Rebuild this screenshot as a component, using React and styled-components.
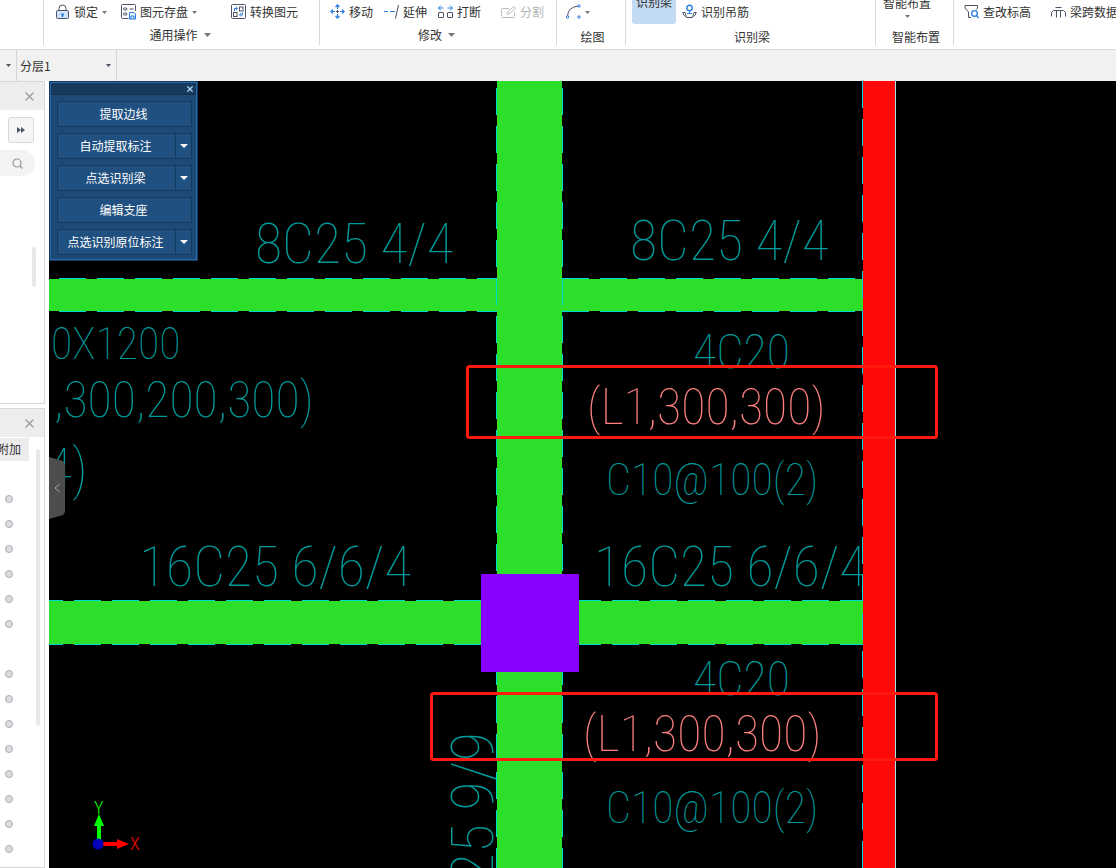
import React, { useState } from 'react'
import styled, { createGlobalStyle } from 'styled-components'

const GlobalStyle = createGlobalStyle`
  * {
    box-sizing: border-box;
  }

  body {
    margin: 0;
    background: #fff;
    color: #333;
    font-family: "Noto Sans CJK SC", "Liberation Sans", sans-serif;
    font-size: 12px;
    line-height: 16px;
  }

  button, select, input {
    font: inherit;
    color: inherit;
  }

  svg {
    display: block;
    flex-shrink: 0;
  }
`;

const Page = styled.div`
  display: flex;
  flex-direction: column;
  height: 100vh;
  overflow: hidden;
`;

/* ---------- ribbon ---------- */

const Ribbon = styled.header`
  display: flex;
  height: 50px;
  flex-shrink: 0;
  padding-bottom: 4px;
  border-bottom: 1px solid #d9d9d9;
  background: #fff;
  overflow: hidden;
`;

const Group = styled.section`
  display: flex;
  flex-direction: column;
  justify-content: flex-end;
  flex: ${props => props.$width ? `0 0 ${props.$width}px` : '1 0 0'};
  min-width: 0;
  padding-bottom: ${props => props.$menu ? '2px' : '0'};
  border-right: ${props => props.$width ? '1px solid #d9d9d9' : '0'};
`;

const Tools = styled.div`
  display: grid;
  grid-template-columns: ${props => props.$columns};
  align-items: end;
  padding-left: ${props => props.$inset}px;
  padding-bottom: ${props => props.$menu ? '7px' : '9px'};
`;

const Tool = styled.button`
  display: flex;
  align-items: center;
  gap: 4px;
  height: 16px;
  padding: 0;
  border: 0;
  background: none;
  white-space: nowrap;
  color: ${props => props.disabled ? '#b4b4b4' : '#333'};
`;

const TallTool = styled.button`
  display: flex;
  flex-direction: column;
  justify-content: flex-end;
  align-items: center;
  gap: 4px;
  width: ${props => props.$width}px;
  height: 66px;
  margin-bottom: -4px;
  padding: 0 0 ${props => props.$active ? '14px' : '6px'};
  border: 0;
  border-radius: 3px;
  background: ${props => props.$active ? '#c2daf2' : 'none'};
  white-space: nowrap;
`;

const GroupLabel = styled.div`
  display: flex;
  align-items: center;
  justify-content: center;
  gap: 6px;
  height: 16px;
  padding-left: ${props => props.$menu ? '0' : '3px'};
  padding-right: ${props => props.$menu ? '3px' : '0'};
`;

/* ---------- layer bar ---------- */

const LayerBar = styled.div`
  display: flex;
  height: 31px;
  flex-shrink: 0;
  background: #f1f1f1;
`;

const FloorButton = styled.button`
  display: flex;
  align-items: center;
  width: 17px;
  padding: 0 0 0 6px;
  border: 0;
  border-right: 1px solid #d5d5d5;
  background: none;
`;

const LayerField = styled.label`
  display: grid;
  grid-template-columns: 1fr 10px;
  align-items: center;
  width: 100px;
  border-right: 1px solid #d5d5d5;

  select {
    grid-area: 1 / 1 / 2 / 3;
    height: 30px;
    padding: 0 12px 0 3px;
    border: 0;
    background: none;
    appearance: none;
  }

  svg {
    grid-area: 1 / 2;
    pointer-events: none;
  }
`;

/* ---------- side docks ---------- */

const Workspace = styled.div`
  display: flex;
  flex: 1;
  min-height: 0;
`;

const Side = styled.aside`
  display: flex;
  flex-direction: column;
  gap: 4px;
  width: 49px;
  flex-shrink: 0;
  padding-right: 4px;
  background: #fff;
`;

const Dock = styled.section`
  display: flex;
  flex-direction: column;
  height: ${props => props.$height ? `${props.$height}px` : 'auto'};
  flex: ${props => props.$height ? 'none' : '1 0 0'};
  min-height: 0;
  border: 1px solid #d8d8d8;
  border-left: 0;
  overflow: hidden;
`;

const DockHeader = styled.div`
  display: flex;
  align-items: center;
  justify-content: flex-end;
  height: 28px;
  flex-shrink: 0;
  padding-right: 10px;
  background: #ededf0;
`;

const IconButton = styled.button`
  padding: 0;
  border: 0;
  background: none;
`;

const ExpandButton = styled.button`
  display: flex;
  align-items: center;
  justify-content: center;
  width: 26px;
  height: 26px;
  flex-shrink: 0;
  margin: 7px 0 7px 8px;
  padding: 0;
  border: 1px solid #d9d9d9;
  border-radius: 3px;
  background: #f5f5f5;
`;

const SearchButton = styled.button`
  display: flex;
  align-items: center;
  justify-content: center;
  width: 35px;
  height: 26px;
  flex-shrink: 0;
  padding: 0;
  border: 0;
  border-radius: 0 13px 13px 0;
  background: #f3f3f3;
`;

const Thumb = styled.div`
  width: 4px;
  height: ${props => props.$height}px;
  flex-shrink: 0;
  border-radius: 2px;
  background: #e8e8e8;
`;

const SearchScroll = styled.div`
  display: flex;
  justify-content: flex-end;
  padding: 71px 8px 0 0;
`;

const DockBody = styled.div`
  display: flex;
  justify-content: space-between;
  padding-right: 4px;
`;

const ColumnHead = styled.div`
  display: flex;
  justify-content: flex-end;
  width: 29px;
  height: 23px;
  margin-top: 1px;
  padding: 3px 8px 0 0;
  background: #ececec;
  white-space: nowrap;
`;

const Dots = styled.ul`
  display: grid;
  grid-auto-rows: 25px;
  align-items: center;
  margin: 0;
  padding: 25px 0 0 5px;
  list-style: none;
`;

const Dot = styled.li`
  width: 8px;
  height: 8px;
  border: ${props => props.$empty ? '0' : '1px solid #a9adb4'};
  border-radius: 50%;
  background: ${props => props.$empty ? 'none' : '#dcdde0'};
`;

const DockScroll = styled.div`
  padding-top: 12px;
`;

/* ---------- drawing area ---------- */

const Canvas = styled.main`
  position: relative;
  flex: 1;
  min-width: 0;
  background: #000;
  overflow: hidden;
`;

const Drawing = styled.svg`
  width: 100%;
  height: 100%;
  font-family: "Roboto Condensed", "Liberation Sans Narrow", sans-serif;
  font-weight: 100;
`;

const Note = styled.text`
  font-size: ${props => props.$size}px;
  fill: ${props => props.$picked ? '#ff8080' : '#009a9a'};
`;

const Palette = styled.div`
  position: absolute;
  top: 0;
  left: 0;
  width: 149px;
  border: 1px solid #16395d;
  background: #1e4a78;
  box-shadow: inset 0 0 0 1px #2468ab;
`;

const PaletteBar = styled.div`
  display: flex;
  align-items: center;
  justify-content: flex-end;
  height: 12px;
  margin: 1px 1px 0;
  padding-right: 3px;
  border-bottom: 1px solid #122f4e;
  background: #16395d;
`;

const PaletteList = styled.div`
  display: grid;
  gap: 6px;
  padding: 6px 5px 5px 7px;
`;

const Command = styled.div`
  display: flex;
  height: 26px;
  border: 1px solid #153a60;
  background: #205080;
`;

const CommandButton = styled.button`
  flex: 1;
  padding: 0 2px 0 0;
  border: 0;
  background: none;
  color: #fff;
  white-space: nowrap;
`;

const CommandMenu = styled.button`
  display: flex;
  align-items: center;
  justify-content: center;
  width: 16px;
  padding: 0;
  border: 0;
  border-left: 1px solid #153a60;
  background: none;
  color: #fff;
`;

const Collapse = styled.button`
  position: absolute;
  top: 376px;
  left: 0;
  display: flex;
  align-items: center;
  justify-content: center;
  width: 16px;
  height: 62px;
  padding: 0;
  border: 0;
  background: #4d4d4d;
  clip-path: polygon(0 0, 14px 4px, 16px 7px, 16px 55px, 14px 58px, 0 100%);
`;

const Axes = styled.svg`
  position: absolute;
  left: 40px;
  bottom: 8px;
  font-family: "Roboto Condensed", "Liberation Sans", sans-serif;
  font-size: 18px;
  font-weight: 300;
`;

/* ---------- icons ---------- */

const Caret = ({ size = 5, color = '#777' }) => (
  <svg width={size} height={Math.ceil(size / 2)} viewBox="0 0 10 5" preserveAspectRatio="none" aria-hidden="true">
    <path d="M0 0h10L5 5z" fill={color} />
  </svg>
);

const Icon = ({ children, color = '#4c5366' }) => (
  <svg width="15" height="16" viewBox="0 0 15 16" fill="none" stroke={color} aria-hidden="true">
    {children}
  </svg>
);

const Cross = ({ size = 9, color = '#999', width = 1.2 }) => (
  <svg width={size} height={size} viewBox="0 0 9 9" stroke={color} strokeWidth={width} aria-hidden="true">
    <path d="M.5.5l8 8M8.5.5l-8 8" />
  </svg>
);

const blue = '#2b7de0';

const LockIcon = () => (
  <Icon>
    <path d="M4 6V4.5a3.5 3.5 0 0 1 7 0V6" />
    <rect x="1.5" y="6.5" width="12" height="8" rx="1" fill="#cfe2fb" />
    <path d="M7.5 13V9.5M6 10.5h3" stroke={blue} strokeWidth="1.5" />
  </Icon>
);

const SaveIcon = () => (
  <Icon>
    <path d="M7.5 14.5H1.5q-1 0-1-1v-12q0-1 1-1h12q1 0 1 1V7" />
    <rect x="2.5" y="4" width="3.5" height="2" rx="1" />
    <rect x="2.5" y="9" width="3.5" height="2" rx="1" />
    <path d="M8.5 5h4" />
    <path d="M8.5 8.5h4.5l1.5 1.5v5h-6zM10 15v-3h3v3" stroke={blue} fill="#e8f2ff" />
  </Icon>
);

const ConvertIcon = () => (
  <Icon>
    <rect x=".5" y=".5" width="14" height="14" rx="1" />
    <rect x="8.5" y="3" width="3.5" height="4" />
    <rect x="2.5" y="8.5" width="3.5" height="4" />
    <path d="M3.5 7V4.5H6M5 2.5l1.5 2L5 6M11.5 8.5V11H9M10 9l-1.5 2 1.5 1.5" stroke={blue} />
  </Icon>
);

const MoveIcon = () => (
  <Icon color={blue}>
    <path d="M7.5 1v4M7.5 10v4M1 7.5h4M10 7.5h4M5.5 3l2-2.2 2 2.2M5.5 12l2 2.2 2-2.2M3 5.5L.8 7.5 3 9.5M12 5.5l2.2 2-2.2 2" strokeWidth="1.2" />
    <path d="M7.5 6v3M6 7.5h3" stroke="#4c5366" />
  </Icon>
);

const ExtendIcon = () => (
  <Icon>
    <path d="M0 7.5h4M6 7.5h5" stroke={blue} />
    <path d="M14.5 1L11.5 14.5" />
  </Icon>
);

const BreakIcon = () => (
  <Icon>
    <rect x=".5" y="8.5" width="5" height="5" rx=".5" />
    <rect x="9.5" y="8.5" width="5" height="5" rx=".5" />
    <path d="M.5 4h5M3 1.5L.5 4 3 6.5M9.5 4h5M12 1.5L14.5 4 12 6.5" stroke={blue} />
  </Icon>
);

const SplitIcon = () => (
  <Icon color="#bbb">
    <path d="M8 4.5H1.5q-1 0-1 1v7q0 1 1 1h11q1 0 1-1V8M6 10.5l1-3 6-5 1.5 2-6 5z" />
  </Icon>
);

const ArcIcon = () => (
  <Icon>
    <path d="M1.5 12Q2 3 12.5 2" />
    <g stroke={blue} fill="#fff">
      <circle cx="1.5" cy="13" r="1.2" />
      <circle cx="13" cy="2" r="1.2" />
      <circle cx="13" cy="13" r="1.2" />
    </g>
  </Icon>
);

const HangerIcon = () => (
  <Icon>
    <path d="M.5 8.5H3L4.5 13.5h6l1.5-5h2.5M1 8.5q0 3 2.5 4M14 8.5q0 3-2.5 4" />
    <circle cx="7.5" cy="4" r="2.7" stroke={blue} strokeWidth="1.4" />
    <path d="M7.5 7v2.5M5 9.5h5" stroke={blue} />
  </Icon>
);

const ElevationIcon = () => (
  <Icon>
    <path d="M7 13.5H4.5V8L1 4V1.5h12.5V4L12.5 5.5" />
    <circle cx="10.5" cy="9.5" r="2.8" stroke={blue} strokeWidth="1.3" />
    <path d="M12.5 11.5l2 2.5" stroke={blue} strokeWidth="1.3" />
  </Icon>
);

const SpanIcon = () => (
  <Icon>
    <path d="M4.5 3.5h6M.5 12.5v-4l2-2h10l2 2v4M5.5 6.5v7M9.5 6.5v7" />
  </Icon>
);

/* ---------- drawing data ---------- */

const notes = [
  { text: '8C25 4/4', x: 206, y: 182, size: 56 },
  { text: '8C25 4/4', x: 581, y: 179, size: 56 },
  { text: '0X1200', x: 2, y: 278, size: 44 },
  { text: ',300,200,300)', x: 5, y: 336, size: 50 },
  { text: '4)', x: -4, y: 407, size: 56 },
  { text: '4C20', x: 644, y: 287, size: 48 },
  { text: '(L1,300,300)', x: 538, y: 343, size: 50, picked: true },
  { text: 'C10@100(2)', x: 557, y: 414, size: 44 },
  { text: '16C25 6/6/4', x: 90, y: 505, size: 56 },
  { text: '16C25 6/6/4', x: 545, y: 505, size: 56 },
  { text: '4C20', x: 644, y: 614, size: 48 },
  { text: '(L1,300,300)', x: 534, y: 670, size: 50, picked: true },
  { text: 'C10@100(2)', x: 557, y: 742, size: 44 },
];

const commands = [
  { label: '提取边线' },
  { label: '自动提取标注', menu: true },
  { label: '点选识别梁', menu: true },
  { label: '编辑支座' },
  { label: '点选识别原位标注', menu: true },
];

// rows of the attribute list, 0 marks a row without an attach box
const attachRows = [1, 1, 1, 1, 1, 1, 0, 1, 1, 1, 1, 1, 1, 1, 1];

const BeamPlan = () => (
  <Drawing role="img" aria-label="梁平面图">
    {notes.map((note, i) => (
      <Note key={i} x={note.x} y={note.y} $size={note.size} $picked={note.picked}>{note.text}</Note>
    ))}
    <Note $size={60} textAnchor="end" transform="translate(444 651) rotate(-90)">25 9/9</Note>

    <g fill="#2bdf2b">
      <rect x="0" y="198" width="814" height="32" />
      <rect x="0" y="520" width="814" height="43" />
      <rect x="448" y="0" width="65" height="100%" />
    </g>
    <g stroke="#00d8d8" strokeDasharray="27 11">
      <path d="M0 197.5H448M0 230.5H448" strokeDashoffset="-10" />
      <path d="M513 197.5H814M513 230.5H814" />
      <path d="M0 519.5H432M0 563.5H432" strokeDashoffset="13" />
      <path d="M530 519.5H814M530 563.5H814" strokeDashoffset="5" />
      <path d="M447.5 0V2000M513.5 0V2000" strokeDashoffset="-7" />
      <path d="M813.5 0V2000" />
    </g>
    <rect x="814" y="0" width="32" height="100%" fill="#ff0808" />
    <rect x="846" y="0" width="1" height="100%" fill="#a0e8e8" />
    <rect x="432" y="493" width="98" height="98" fill="#8800ff" />

    <g fill="none" stroke="#ff1a0d" strokeWidth="3">
      <rect x="418.5" y="285.5" width="469" height="71" rx="2" />
      <rect x="382.5" y="612.5" width="505" height="66" rx="2" />
    </g>
  </Drawing>
);

const RibbonBar = () => (
  <Ribbon>
    <Group $width={44} />
    <Group $width={276} $menu>
      <Tools $columns="66px 110px auto" $inset={11} $menu>
        <Tool><LockIcon />锁定<Caret /></Tool>
        <Tool><SaveIcon />图元存盘<Caret /></Tool>
        <Tool><ConvertIcon />转换图元</Tool>
      </Tools>
      <GroupLabel $menu>通用操作<Caret size={7} /></GroupLabel>
    </Group>
    <Group $width={237} $menu>
      <Tools $columns="54px 54px 63px auto" $inset={10} $menu>
        <Tool><MoveIcon />移动</Tool>
        <Tool><ExtendIcon />延伸</Tool>
        <Tool><BreakIcon />打断</Tool>
        <Tool disabled><SplitIcon />分割</Tool>
      </Tools>
      <GroupLabel $menu>修改<Caret size={7} /></GroupLabel>
    </Group>
    <Group $width={69}>
      <Tools $columns="auto" $inset={9}>
        <Tool aria-label="弧线"><ArcIcon /><Caret /></Tool>
      </Tools>
      <GroupLabel>绘图</GroupLabel>
    </Group>
    <Group $width={250}>
      <Tools $columns="50px auto" $inset={6}>
        <TallTool $width={44} $active>识别梁</TallTool>
        <Tool><HangerIcon />识别吊筋</Tool>
      </Tools>
      <GroupLabel>识别梁</GroupLabel>
    </Group>
    <Group $width={78}>
      <Tools $columns="auto" $inset={7}>
        <TallTool $width={48}>智能布置<Caret /></TallTool>
      </Tools>
      <GroupLabel>智能布置</GroupLabel>
    </Group>
    <Group>
      <Tools $columns="87px auto" $inset={10}>
        <Tool><ElevationIcon />查改标高</Tool>
        <Tool><SpanIcon />梁跨数据</Tool>
      </Tools>
      <GroupLabel />
    </Group>
  </Ribbon>
);

const SideDocks = () => (
  <Side>
    <Dock $height={323}>
      <DockHeader>
        <IconButton aria-label="关闭"><Cross /></IconButton>
      </DockHeader>
      <ExpandButton aria-label="展开">
        <svg width="8" height="6" viewBox="0 0 8 6" fill="#4c5366"><path d="M0 0l4 3-4 3zM4 0l4 3-4 3z" /></svg>
      </ExpandButton>
      <SearchButton aria-label="搜索">
        <svg width="11" height="11" viewBox="0 0 11 11" fill="none" stroke="#999" strokeWidth="1.2">
          <circle cx="5" cy="5" r="4" />
          <path d="M8 8l2.5 2.5" />
        </svg>
      </SearchButton>
      <SearchScroll><Thumb $height={40} /></SearchScroll>
    </Dock>
    <Dock>
      <DockHeader>
        <IconButton aria-label="关闭"><Cross /></IconButton>
      </DockHeader>
      <DockBody>
        <div>
          <ColumnHead>附加</ColumnHead>
          <Dots>
            {attachRows.map((row, i) => <Dot key={i} $empty={!row} />)}
          </Dots>
        </div>
        <DockScroll><Thumb $height={277} /></DockScroll>
      </DockBody>
    </Dock>
  </Side>
);

const App = () => {
  const [paletteOpen, setPaletteOpen] = useState(true);

  return (
    <Page>
      <GlobalStyle />
      <RibbonBar />
      <LayerBar>
        <FloorButton aria-label="楼层"><Caret color="#4c5366" /></FloorButton>
        <LayerField>
          <select aria-label="分层" defaultValue="1">
            <option value="1">分层1</option>
            <option value="2">分层2</option>
          </select>
          <Caret color="#4c5366" />
        </LayerField>
      </LayerBar>
      <Workspace>
        <SideDocks />
        <Canvas>
          <BeamPlan />
          {paletteOpen && (
            <Palette>
              <PaletteBar>
                <IconButton aria-label="关闭" onClick={() => setPaletteOpen(false)}>
                  <Cross size={6} color="#a9d4f5" width={2} />
                </IconButton>
              </PaletteBar>
              <PaletteList>
                {commands.map(command => (
                  <Command key={command.label}>
                    <CommandButton>{command.label}</CommandButton>
                    {command.menu && (
                      <CommandMenu aria-label={`${command.label}选项`}>
                        <Caret size={8} color="#fff" />
                      </CommandMenu>
                    )}
                  </Command>
                ))}
              </PaletteList>
            </Palette>
          )}
          <Collapse aria-label="收起">
            <svg width="6" height="10" viewBox="0 0 6 10" fill="none" stroke="#aaa"><path d="M5.5 1L1 5l4.5 4" /></svg>
          </Collapse>
          <Axes width="60" height="60" viewBox="0 0 60 60">
            <path d="M10 44V24" stroke="#0f0" strokeWidth="4" />
            <path d="M10 14l5 12H5z" fill="#0f0" />
            <path d="M10 44H30" stroke="#f00" strokeWidth="4" />
            <path d="M40 44l-12-5v10z" fill="#f00" />
            <circle cx="9" cy="44" r="5.5" fill="#0000b8" />
            <text x="5" y="14" fill="#0f0">Y</text>
            <text x="41" y="50" fill="#f00">X</text>
          </Axes>
        </Canvas>
      </Workspace>
    </Page>
  );
};

export default App;
